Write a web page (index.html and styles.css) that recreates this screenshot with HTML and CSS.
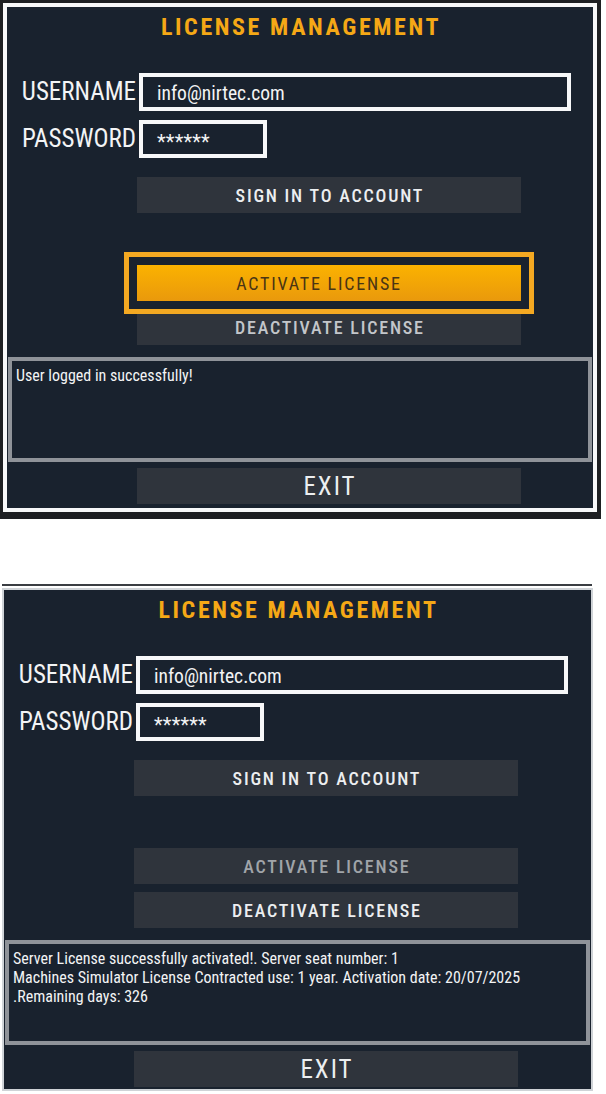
FILE: index.html
```html
<!DOCTYPE html>
<html lang="en">
<head>
<meta charset="utf-8">
<title>License Management</title>
<link rel="stylesheet" href="styles.css">
</head>
<body>
<div class="frame">
  <section class="panel">
    <h1 class="title">LICENSE MANAGEMENT</h1>
    <div class="form">
      <label class="label">USERNAME</label>
      <div class="field field--wide">info@nirtec.com</div>
      <label class="label">PASSWORD</label>
      <div class="field field--short field--pw">******</div>
    </div>
    <div class="actions">
      <button class="btn btn--signin">SIGN IN TO ACCOUNT</button>
      <button class="btn btn--activate btn--focused">ACTIVATE LICENSE</button>
      <button class="btn btn--deactivate btn--dim">DEACTIVATE LICENSE</button>
    </div>
    <div class="log">User logged in successfully!</div>
    <div class="actions">
      <button class="btn btn--exit">EXIT</button>
    </div>
  </section>
</div>

<div class="rule"></div>

<section class="panel panel--plain">
  <h1 class="title">LICENSE MANAGEMENT</h1>
  <div class="form">
    <label class="label">USERNAME</label>
    <div class="field field--wide">info@nirtec.com</div>
    <label class="label">PASSWORD</label>
    <div class="field field--short field--pw">******</div>
  </div>
  <div class="actions">
    <button class="btn btn--signin">SIGN IN TO ACCOUNT</button>
    <button class="btn btn--activate-off">ACTIVATE LICENSE</button>
    <button class="btn btn--deactivate">DEACTIVATE LICENSE</button>
  </div>
  <div class="log">Server License successfully activated!. Server seat number: 1<br>Machines Simulator License Contracted use: 1 year. Activation date: 20/07/2025<br>.Remaining days: 326</div>
  <div class="actions">
    <button class="btn btn--exit">EXIT</button>
  </div>
</section>
</body>
</html>
```
FILE: styles.css
```css
* { box-sizing: border-box; }

body {
  margin: 0;
  background: #ffffff;
  font-family: "Roboto Condensed", Roboto, sans-serif;
  color: #f1f2f3;
}

.frame {
  width: 601px;
  padding: 3px 4px 7px 3px;
  background: #1d1f22;
}

.panel {
  background: #19222e;
  border: 4px solid #f7f8f9;
  padding: 6px 0 4px;
}

.panel--plain {
  width: 591px;
  margin: 2px 0 0 2px;
  border: 2px solid #cfd3d7;
  padding: 6px 0 2px;
}

.rule {
  margin: 65px 0 0 2px;
  width: 590px;
  height: 2px;
  background: #3a3d42;
}

.title {
  margin: 0;
  padding-left: 2px;
  text-align: center;
  font-family: "Roboto Condensed", Roboto, sans-serif;
  font-weight: 700;
  font-size: 24px;
  line-height: 28px;
  letter-spacing: 2.6px;
  color: #f5a816;
}

.form {
  display: grid;
  grid-template-columns: 129px auto;
  column-gap: 3px;
  row-gap: 9px;
  align-items: center;
  justify-items: start;
  margin-top: 32px;
}

.label {
  justify-self: end;
  font-size: 25px;
  line-height: 28px;
  color: #f3f4f5;
}

.field {
  height: 38px;
  border: 4px solid #f7f8f9;
  background: #19222e;
  padding: 3px 14px 0;
  font-size: 19.5px;
  line-height: 27px;
  color: #f3f4f5;
}

.field--wide { width: 432px; }
.field--short { width: 128px; }
.field--pw { font-size: 20px; letter-spacing: 0.2px; padding-top: 5px; }

.actions {
  display: flex;
  flex-direction: column;
  gap: 8px;
  padding-left: 130px;
}

.btn {
  display: block;
  width: 384px;
  height: 36px;
  border: 0;
  padding: 0 0 0 1.8px;
  background: #2f343c;
  font-family: "Roboto Condensed", Roboto, sans-serif;
  font-size: 18px;
  font-weight: 500;
  letter-spacing: 1.8px;
  color: #eceef0;
}

.btn--signin { margin-top: 19px; margin-bottom: 44px; }

.btn--activate {
  position: relative;
  z-index: 1;
  padding: 0 20px 0 0;
  background: linear-gradient(#fbb200, #e9990c);
  color: #4a3514;
  font-weight: 400;
  box-shadow: 0 0 0 8px #19222e, 0 0 0 13px #f4a922;
}

.btn--dim { color: #c3c6ca; }

.btn--activate-off { color: #a0a4a9; }

.log {
  margin: 12px 1px 0;
  height: 105px;
  border: 4px solid #8f9399;
  background: #19222e;
  padding: 5px 4px;
  font-size: 16px;
  line-height: 19px;
  color: #f3f4f5;
}

.log + .actions .btn--exit { margin-top: 6px; }

.btn--exit {
  padding-left: 2px;
  font-size: 25px;
  letter-spacing: 2px;
  font-weight: 400;
}
```
